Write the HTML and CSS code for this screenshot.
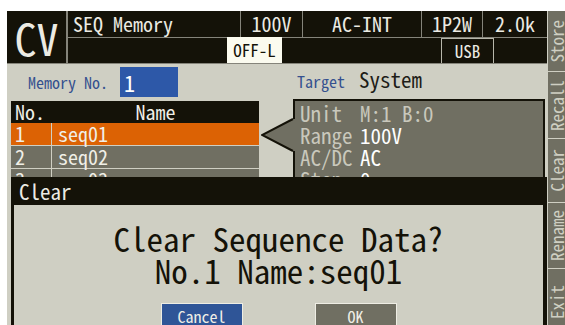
FILE: index.html
```html
<!DOCTYPE html>
<html lang="en">
<head>
    <meta charset="UTF-8">
    <meta name="viewport" content="width=device-width, initial-scale=1.0">
    <title>SEQ Memory - Clear</title>
    <link rel="stylesheet" href="styles.css">
</head>
<body>
    <div class="screen">
        <div class="main">
            <div class="status">
                <div class="mode">CV</div>
                <div class="status-rows">
                    <div class="status-top">
                        <div class="cell title">SEQ Memory</div>
                        <div class="cell">100V</div>
                        <div class="cell">AC-INT</div>
                        <div class="cell">1P2W</div>
                        <div class="cell">2.0k</div>
                    </div>
                    <div class="status-bottom">
                        <div></div>
                        <div class="tag-off">OFF-L</div>
                        <div></div>
                        <div class="tag-usb">USB</div>
                    </div>
                </div>
            </div>

            <div class="content">
                <div class="col-left">
                    <div class="mem-row">
                        <span class="label">Memory No.</span>
                        <span class="mem-input">1</span>
                    </div>
                    <div class="seq-table">
                        <div class="seq-head"><span>No.</span><span class="name">Name</span></div>
                        <div class="seq-row selected"><span>1</span><span>seq01</span></div>
                        <div class="seq-row"><span>2</span><span>seq02</span></div>
                        <div class="seq-row"><span>3</span><span>seq03</span></div>
                    </div>
                </div>
                <div class="col-right">
                    <div class="target"><span class="label">Target</span>System</div>
                    <div class="info">
                        <svg class="pointer" width="36" height="34" viewBox="0 0 36 34">
                            <polygon points="36,1 32,1 1,17 32,33 36,33" fill="#706f62"/>
                            <polyline points="32,1 1,17 32,33" fill="none" stroke="#141208" stroke-width="2"/>
                        </svg>
                        <div class="info-line dim"><span>Unit</span><span>M:1 B:0</span></div>
                        <div class="info-line"><span>Range</span><span>100V</span></div>
                        <div class="info-line"><span>AC/DC</span><span>AC</span></div>
                        <div class="info-line"><span>Step</span><span>0</span></div>
                    </div>
                </div>
            </div>

            <div class="dialog">
                <div class="dialog-title">Clear</div>
                <div class="dialog-body">
                    <p class="dialog-msg">Clear Sequence Data?<br>No.1 Name:seq01</p>
                    <div class="dialog-buttons">
                        <button class="btn btn-cancel">Cancel</button>
                        <button class="btn btn-ok">OK</button>
                    </div>
                </div>
            </div>
        </div>

        <div class="softkeys">
            <div class="key key-store"><span>Store</span></div>
            <div class="key key-recall"><span>Recall</span></div>
            <div class="key key-clear"><span>Clear</span></div>
            <div class="key key-rename"><span>Rename</span></div>
            <div class="key key-exit"><span>Exit</span></div>
        </div>
    </div>
</body>
</html>
```

FILE: styles.css
```css
html, body {
    overflow: hidden;
}
body {
    margin: 0;
    padding: 11px 0 0 7px;
    background: #fff;
}
.screen {
    display: flex;
    gap: 1px;
    width: 558px;
    height: 314px;
    overflow: hidden;
    background: #cfcfc3;
    font-family: "Noto Sans Mono CJK JP", "DejaVu Sans Mono", monospace;
    color: #ecebe3;
}
.main {
    position: relative;
    width: 540px;
    flex: none;
}

/* status bar */
.status {
    display: flex;
    height: 53px;
    background: #141208;
    border-bottom: 1px solid #85847a;
    box-sizing: border-box;
}
.mode {
    width: 61px;
    border-right: 2px solid #85847a;
    box-sizing: border-box;
    display: flex;
    align-items: center;
    justify-content: center;
    font-size: 44px;
    line-height: 44px;
}
.status-rows {
    flex: 1;
    display: flex;
    flex-direction: column;
}
.status-top {
    display: grid;
    grid-template-columns: 172px 62px 119px 61px 65px;
    height: 27px;
    border-bottom: 1px solid #85847a;
    box-sizing: border-box;
}
.cell {
    font-size: 20px;
    line-height: 26px;
    text-align: center;
    border-left: 1px solid #85847a;
}
.cell.title {
    border-left: none;
    text-align: left;
    padding-left: 5px;
}
.status-bottom {
    display: grid;
    grid-template-columns: 159px 55px 159px 53px 1fr;
    height: 25px;
}
.tag-off, .tag-usb {
    font-size: 17px;
    line-height: 24px;
    text-align: center;
}
.tag-off {
    background: #fbfbef;
    color: #141208;
    margin-top: -1px;
    line-height: 26px;
}
.tag-usb {
    border: 1px solid #b7b6aa;
    border-bottom: none;
}

/* content */
.content {
    display: flex;
}
.col-left {
    width: 252px;
    padding-left: 4px;
    box-sizing: border-box;
}
.mem-row {
    display: flex;
    align-items: center;
    height: 30px;
    margin-top: 3px;
}
.label {
    font-size: 16px;
    color: #35518f;
}
.mem-row .label {
    width: 109px;
    padding-left: 17px;
    box-sizing: border-box;
}
.mem-input {
    width: 58px;
    height: 30px;
    box-sizing: border-box;
    padding-left: 4px;
    background: #2d58a8;
    color: #fff;
    font-size: 22px;
    line-height: 30px;
}
.seq-table {
    margin-top: 4px;
}
.seq-head, .seq-row {
    display: grid;
    grid-template-columns: 41px 1fr;
    font-size: 20px;
    color: #f0efe7;
}
.seq-head {
    height: 22px;
    line-height: 22px;
    background: #141208;
}
.seq-head span, .seq-row span:first-child {
    padding-left: 4px;
}
.seq-head .name {
    padding-left: 0;
    text-align: center;
}
.seq-row {
    height: 23px;
    line-height: 22px;
    background: #706f62;
    border-bottom: 1px solid #cfcfc3;
    box-sizing: border-box;
}
.seq-row.selected {
    background: #dc6204;
}
.seq-row span:first-child {
    border-right: 1px solid #cfcfc3;
}
.seq-row span:last-child {
    padding-left: 6px;
}

.col-right {
    flex: 1;
}
.target {
    height: 35px;
    padding-left: 38px;
    font-size: 21px;
    line-height: 30px;
    color: #1e1d18;
}
.target .label {
    display: inline-block;
    width: 62px;
}
.info {
    position: relative;
    height: 110px;
    margin: 0 2px 0 34px;
    padding: 1px 0 0 5px;
    border: 2px solid #141208;
    background: #706f62;
    font-size: 21px;
    line-height: 22px;
    color: #fff;
}
.pointer {
    position: absolute;
    left: -34px;
    top: 17px;
}
.info-line {
    display: flex;
}
.info-line span:first-child {
    width: 60px;
    color: #c9c8bc;
}
.info-line.dim span {
    color: #c9c8bc;
}

/* dialog */
.dialog {
    position: absolute;
    left: 4px;
    top: 166px;
    width: 536px;
    height: 170px;
    box-sizing: border-box;
    border-left: 3px solid #141208;
    border-right: 4px solid #141208;
    background: #cfcfc3;
}
.dialog-title {
    height: 28px;
    padding-left: 5px;
    background: #141208;
    font-size: 21px;
    line-height: 28px;
}
.dialog-body {
    text-align: center;
}
.dialog-msg {
    margin: 17px 0 0;
    font-size: 33px;
    line-height: 32px;
    color: #141208;
}
.dialog-buttons {
    display: flex;
    justify-content: center;
    gap: 72px;
    margin-top: 17px;
}
.btn {
    width: 82px;
    height: 26px;
    padding: 0;
    border: 1px solid #eeede4;
    font-family: inherit;
    font-size: 16px;
    line-height: 24px;
    color: #efeee6;
}
.btn-cancel {
    background: #2f5597;
}
.btn-ok {
    background: #706f62;
}

/* soft keys */
.softkeys {
    width: 17px;
    flex: none;
    display: flex;
    flex-direction: column;
}
.key {
    display: flex;
    align-items: center;
    justify-content: center;
    flex: none;
    background: #706f62;
    border-bottom: 1px solid #cfcfc3;
    box-sizing: border-box;
    overflow: hidden;
}
.key span {
    writing-mode: vertical-rl;
    transform: rotate(180deg);
    font-size: 17px;
    line-height: 17px;
    color: #cfcfc3;
}
.key-store { height: 61px; }
.key-recall { height: 67px; }
.key-clear { height: 64px; }
.key-rename { height: 66px; }
.key-exit { height: 66px; }
```
